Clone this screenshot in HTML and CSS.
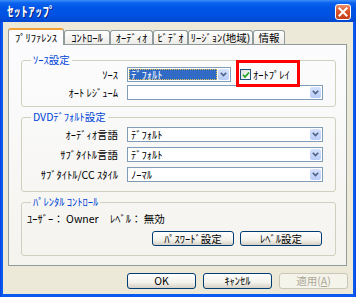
FILE: index.html
```html
<!DOCTYPE html>
<html lang="ja">
<head>
<meta charset="utf-8">
<title>ｾｯﾄｱｯﾌﾟ</title>
<link rel="stylesheet" href="styles.css">
</head>
<body>
<div class="window">
  <div class="titlebar">
    <span class="title">ｾｯﾄｱｯﾌﾟ</span>
    <span class="close"><svg width="10" height="10" viewBox="0 0 10 10"><path d="M1.5 1.5 L8.5 8.5 M8.5 1.5 L1.5 8.5" stroke="#fff" stroke-width="2" stroke-linecap="square"/></svg></span>
  </div>
  <div class="body">
    <div class="tabs">
      <div class="tab active t1">ﾌﾟﾘﾌｧﾚﾝｽ</div>
      <div class="tab t2">ｺﾝﾄﾛｰﾙ</div>
      <div class="tab t3">ｵｰﾃﾞｨｵ</div>
      <div class="tab t4">ﾋﾞﾃﾞｵ</div>
      <div class="tab t5">ﾘｰｼﾞｮﾝ(地域)</div>
      <div class="tab t6">情報</div>
    </div>
    <div class="panel">
      <fieldset class="group g1">
        <legend>ｿｰｽ設定</legend>
        <div class="row">
          <span class="label">ｿｰｽ</span>
          <div class="combo short"><span class="val"><span class="hl">ﾃﾞﾌｫﾙﾄ</span></span><span class="drop"><svg width="7" height="5" viewBox="0 0 7 5"><path d="M0.8 0.8 L3.5 3.6 L6.2 0.8" fill="none" stroke="#4D6185" stroke-width="1.6"/></svg></span></div>
          <div class="autoplay"><span class="check"><svg width="8" height="8" viewBox="0 0 8 8"><path d="M1 3.8 L3 6 L7 1.5" fill="none" stroke="#21A121" stroke-width="1.7"/></svg></span><span>ｵｰﾄﾌﾟﾚｲ</span></div>
        </div>
        <div class="row">
          <span class="label">ｵｰﾄ ﾚｼﾞｭｰﾑ</span>
          <div class="combo"><span class="val"></span><span class="drop"><svg width="7" height="5" viewBox="0 0 7 5"><path d="M0.8 0.8 L3.5 3.6 L6.2 0.8" fill="none" stroke="#4D6185" stroke-width="1.6"/></svg></span></div>
        </div>
      </fieldset>
      <fieldset class="group g2">
        <legend>DVDﾃﾞﾌｫﾙﾄ設定</legend>
        <div class="row">
          <span class="label">ｵｰﾃﾞｨｵ言語</span>
          <div class="combo"><span class="val">ﾃﾞﾌｫﾙﾄ</span><span class="drop"><svg width="7" height="5" viewBox="0 0 7 5"><path d="M0.8 0.8 L3.5 3.6 L6.2 0.8" fill="none" stroke="#4D6185" stroke-width="1.6"/></svg></span></div>
        </div>
        <div class="row">
          <span class="label">ｻﾌﾞﾀｲﾄﾙ言語</span>
          <div class="combo"><span class="val">ﾃﾞﾌｫﾙﾄ</span><span class="drop"><svg width="7" height="5" viewBox="0 0 7 5"><path d="M0.8 0.8 L3.5 3.6 L6.2 0.8" fill="none" stroke="#4D6185" stroke-width="1.6"/></svg></span></div>
        </div>
        <div class="row">
          <span class="label">ｻﾌﾞﾀｲﾄﾙ/CC ｽﾀｲﾙ</span>
          <div class="combo"><span class="val">ﾉｰﾏﾙ</span><span class="drop"><svg width="7" height="5" viewBox="0 0 7 5"><path d="M0.8 0.8 L3.5 3.6 L6.2 0.8" fill="none" stroke="#4D6185" stroke-width="1.6"/></svg></span></div>
        </div>
      </fieldset>
      <fieldset class="group g3">
        <legend>ﾊﾟﾚﾝﾀﾙ ｺﾝﾄﾛｰﾙ</legend>
        <div class="info">
          <span class="user">ﾕｰｻﾞｰ： Owner</span>
          <span>ﾚﾍﾞﾙ： 無効</span>
        </div>
        <div class="pbuttons">
          <button class="btn wide">ﾊﾟｽﾜｰﾄﾞ設定</button>
          <button class="btn wide">ﾚﾍﾞﾙ設定</button>
        </div>
      </fieldset>
    </div>
    <div class="actions">
      <button class="btn">OK</button>
      <button class="btn">ｷｬﾝｾﾙ</button>
      <button class="btn disabled">適用(<u>A</u>)</button>
    </div>
  </div>
</div>
</body>
</html>
```

FILE: styles.css
```css
* { box-sizing: border-box; }
html, body { margin: 0; padding: 0; }
body {
  width: 356px;
  height: 297px;
  overflow: hidden;
  font-family: "Noto Sans CJK JP", "Noto Sans", sans-serif;
  font-size: 10.5px;
  line-height: 12px;
  color: #000;
  background: #ECE9D8;
}
.window {
  width: 356px;
  height: 297px;
  display: flex;
  flex-direction: column;
  background: linear-gradient(90deg, #0831D9 0, #0A5AF0 1px, #0A5AF0 355px, #0831D9 356px);
}
.titlebar {
  height: 22px;
  flex: none;
  display: flex;
  align-items: center;
  justify-content: space-between;
  padding: 0 5px 0 7px;
  background: linear-gradient(#3D8FF8 0, #0A62EE 3px, #0055E6 8px, #0052E2 15px, #0047D0 22px);
}
.title {
  color: #fff;
  font-weight: bold;
  font-size: 13px;
  letter-spacing: 0.6px;
  text-shadow: 1px 1px 0 #0A1E7E;
}
.close {
  width: 16px;
  height: 16px;
  margin-top: 2px;
  border: 1px solid #fff;
  border-radius: 3px;
  background: linear-gradient(#EC8E6C, #DA5429 45%, #C5401A);
  display: flex;
  align-items: center;
  justify-content: center;
}
.body {
  flex: 1;
  margin: 0 3px 3px;
  background: #ECE9D8;
  padding: 6px 6px 0 5px;
  display: flex;
  flex-direction: column;
}
.tabs {
  display: flex;
  height: 16px;
  align-items: flex-end;
  position: relative;
  z-index: 1;
}
.tab {
  height: 14px;
  border: 1px solid #919B9C;
  border-bottom: none;
  border-radius: 3px 3px 0 0;
  background: linear-gradient(#FFFFFF, #ECEBE6);
  display: flex;
  align-items: center;
  justify-content: center;
  white-space: nowrap;
}
.tab.active {
  height: 17px;
  margin-bottom: -1px;
  background: #FCFCFE;
  border-top: 2px solid #F1A33A;
}
.t1 { width: 56px; }
.t2 { width: 46px; }
.t3 { width: 43px; }
.t4 { width: 35px; }
.t5 { width: 65px; }
.t6 { width: 32px; }
.panel {
  height: 222px;
  flex: none;
  border: 1px solid #919B9C;
  background: linear-gradient(#FCFCFE, #F4F3EE);
  padding: 0 10px 0 12px;
  display: flex;
  flex-direction: column;
}
.group {
  margin: 0;
  padding: 0;
  min-width: 0;
  border: 1px solid #D0D0BF;
  border-radius: 3px;
}
.group legend {
  color: #0046D5;
  padding: 0 2px;
  margin-left: 9px;
  line-height: 12px;
}
.g1 { margin-top: 9px; padding-top: 1px; padding-bottom: 6px; }
.g2 { margin-top: 4px; padding-top: 4px; padding-bottom: 9px; }
.g3 { margin-top: 4px; padding-top: 4px; padding-bottom: 9px; }
.row {
  display: flex;
  align-items: center;
  height: 15px;
}
.g1 .row + .row { margin-top: 3px; }
.g2 .row + .row { margin-top: 5px; }
.label {
  width: 96px;
  text-align: right;
  margin-right: 9px;
  white-space: nowrap;
}
.combo {
  width: 196px;
  height: 15px;
  border: 1px solid #7F9DB9;
  background: #fff;
  display: flex;
  align-items: stretch;
  padding: 1px;
}
.combo.short { width: 104px; }
.val {
  flex: 1;
  padding-left: 2px;
  display: flex;
  align-items: center;
  white-space: nowrap;
}
.short .val { padding: 0 1px 0 0; }
.hl {
  flex: 1;
  height: 100%;
  background: #316AC5;
  color: #fff;
  outline: 1px dotted #E8C550;
  outline-offset: -1px;
  display: flex;
  align-items: center;
  padding-left: 2px;
}
.drop {
  width: 11px;
  border-radius: 2px;
  background: linear-gradient(#D6E2FD, #B8CCF8);
  display: flex;
  align-items: center;
  justify-content: center;
}
.autoplay {
  position: relative;
  display: flex;
  align-items: center;
  margin-left: 9px;
  width: 52px;
  height: 15px;
  white-space: nowrap;
}
.autoplay::before {
  content: "";
  position: absolute;
  left: -4px;
  right: -8px;
  top: -7px;
  bottom: -5px;
  border: 3px solid #FF0000;
}
.check {
  width: 11px;
  height: 11px;
  border: 1px solid #1C5180;
  background: linear-gradient(135deg, #DCDCD7, #FFFFFF);
  margin-right: 2px;
  display: flex;
  align-items: center;
  justify-content: center;
}
.info {
  display: flex;
  height: 12px;
  margin-top: 1px;
  padding-left: 5px;
  white-space: nowrap;
}
.user { width: 83px; }
.pbuttons {
  display: flex;
  justify-content: flex-end;
  gap: 6px;
  margin-top: 6px;
  margin-right: 13px;
}
.btn {
  width: 69px;
  height: 16px;
  padding: 0;
  margin: 0;
  font: inherit;
  color: #000;
  border: 1px solid #003C74;
  border-radius: 3px;
  background: linear-gradient(#FFFFFF, #F3F2EC 60%, #D6D0C5);
  display: flex;
  align-items: center;
  justify-content: center;
}
.btn.wide { width: 82px; height: 15px; }
.btn.disabled {
  color: #ACA899;
  border-color: #C9C7BA;
  background: #F5F4EA;
}
.actions {
  display: flex;
  justify-content: flex-end;
  gap: 7px;
  margin-top: 7px;
  margin-right: -1px;
}
```
